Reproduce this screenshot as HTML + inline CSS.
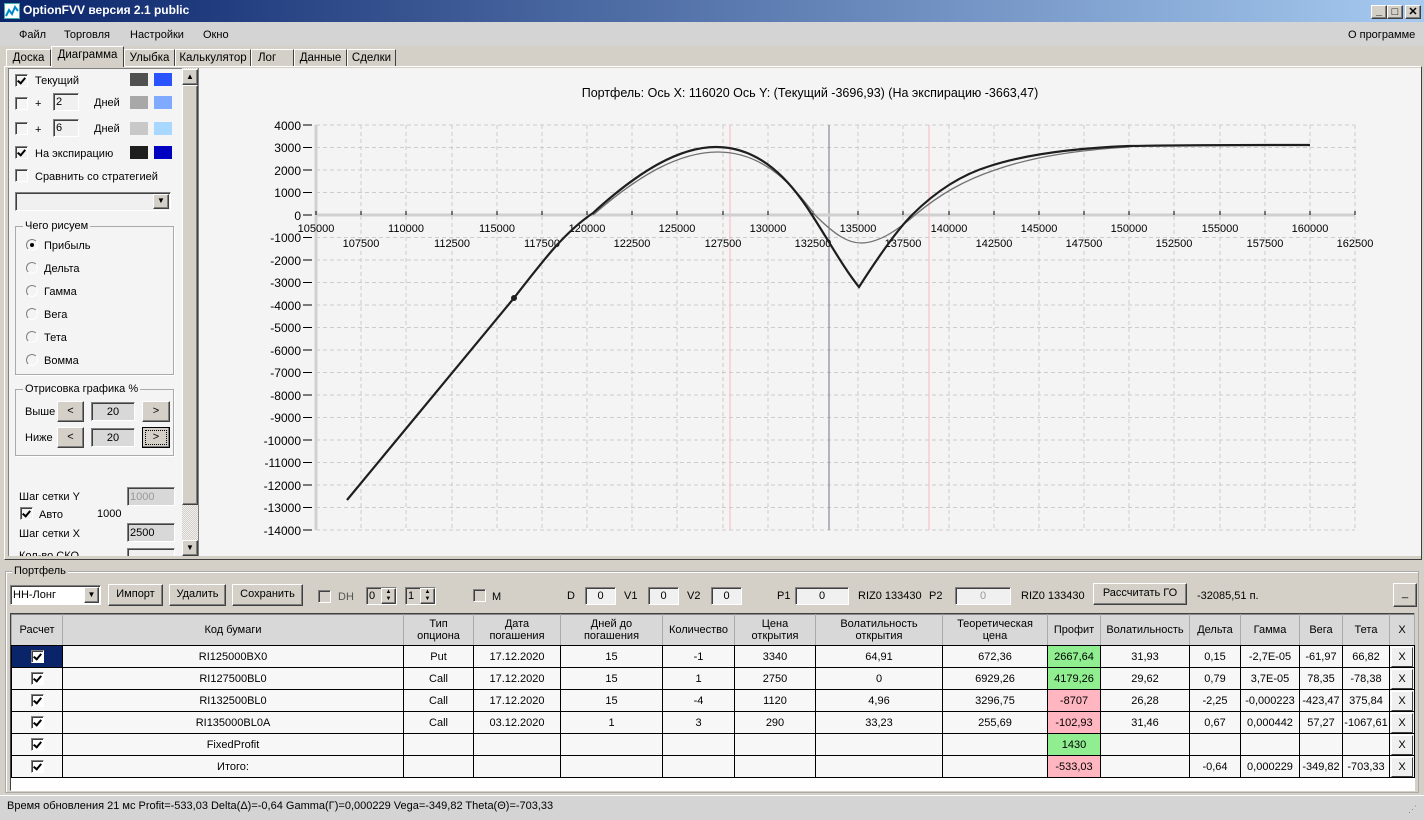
<!DOCTYPE html>
<html><head><meta charset="utf-8"><style>
*{box-sizing:border-box;margin:0;padding:0}
body{width:1424px;height:820px;overflow:hidden;background:#d4d0c8;font-family:"Liberation Sans",sans-serif;font-size:11px;color:#000;position:relative}
.a{position:absolute}
.t{position:absolute;white-space:nowrap;line-height:13px}
.cb{position:absolute;width:13px;height:13px;background:#f4f4f4;border:1px solid;border-color:#808080 #fff #fff #808080;box-shadow:inset 1px 1px 0 #404040}
.cb.k::after{content:"";position:absolute;left:3px;top:1px;width:3px;height:6px;border:solid #000;border-width:0 2px 2px 0;transform:rotate(40deg)}
.sw{position:absolute;width:18px;height:13px}
.inp{position:absolute;background:#f0f0f0;border:1px solid;border-color:#808080 #fff #fff #808080;box-shadow:inset 1px 1px 0 #404040;padding-left:2px;display:flex;align-items:center}
.inp.c{justify-content:center;padding-left:0}
.btn{position:absolute;background:#d4d0c8;border:1px solid;border-color:#fff #404040 #404040 #fff;box-shadow:inset -1px -1px 0 #808080;text-align:center;line-height:18px}
.grp{position:absolute;border:1px solid #aaa;box-shadow:1px 1px 0 #fff}
.grp span{position:absolute;top:-7px;left:7px;background:#f4f4f4;padding:0 2px;line-height:12px}
.rad{position:absolute;width:12px;height:12px;border-radius:50%;background:#f4f4f4;border:1px solid;border-color:#808080 #fff #fff #808080}
.tab{position:absolute;top:49px;height:18px;background:#d4d0c8;border:1px solid;border-color:#fff #404040 transparent #fff;text-align:center;line-height:16px;font-size:11.5px}
table{border-collapse:collapse;position:absolute;left:11px;top:614px;table-layout:fixed;background:#f7f7f7}
td{border:1px solid #000;text-align:center;height:22px;font-size:11px;padding:0;white-space:nowrap;overflow:hidden}
tr.h td{background:#d8d8d8;height:31px;line-height:12px;border-color:#888 #aaa;border-bottom:1px solid #000}
.g{background:#90ee90}.p{background:#ffb6c1}
.xb{display:block;margin:0 auto;width:22px;height:20px;border:1px solid;border-color:#fff #404040 #404040 #fff;background:#efefef;line-height:18px}
.tc{display:inline-block;width:13px;height:13px;border:1px solid;border-color:#808080 #fff #fff #808080;box-shadow:inset 1px 1px 0 #404040;background:#fff;position:relative;vertical-align:middle}
.tc::after{content:"";position:absolute;left:3px;top:1px;width:3px;height:6px;border:solid #000;border-width:0 2px 2px 0;transform:rotate(40deg)}
</style></head><body>
<div class="a" style="left:0;top:0;width:1424px;height:22px;background:linear-gradient(90deg,#0a246a,#a6caf0)"></div>
<div class="a" style="left:4px;top:3px;width:16px;height:16px;background:#fff;border:1px solid #4aa"><svg width="14" height="14"><path d="M1,12 L4,6 L7,10 L10,3 L13,7" stroke="#08c" fill="none" stroke-width="2"/></svg></div>
<div class="t" style="left:23px;top:4px;color:#fff;font-weight:bold;font-size:12px">OptionFVV версия 2.1 public</div>
<div class="btn" style="left:1371px;top:5px;width:16px;height:14px;line-height:10px;font-weight:bold">_</div>
<div class="btn" style="left:1387px;top:5px;width:16px;height:14px;line-height:12px">□</div>
<div class="btn" style="left:1405px;top:5px;width:16px;height:14px;line-height:12px;font-weight:bold">✕</div>
<div class="a" style="left:0;top:22px;width:1424px;height:24px;background:#d4d4d4"></div>
<div class="t" style="left:19px;top:29px">Файл</div><div class="t" style="left:64px;top:29px">Торговля</div><div class="t" style="left:130px;top:29px">Настройки</div><div class="t" style="left:203px;top:29px">Окно</div><div class="t" style="left:1348px;top:29px">О программе</div>
<div class="tab" style="left:6px;width:45px">Доска</div>
<div class="tab" style="left:51px;width:73px;top:46px;height:21px;z-index:2;background:#d4d0c8;border-bottom:none">Диаграмма</div>
<div class="tab" style="left:124px;width:51px">Улыбка</div>
<div class="tab" style="left:175px;width:76px">Калькулятор</div>
<div class="tab" style="left:251px;width:43px;text-align:left;padding-left:6px">Лог</div>
<div class="tab" style="left:294px;width:53px">Данные</div>
<div class="tab" style="left:347px;width:49px">Сделки</div>
<div class="a" style="left:4px;top:66px;width:1418px;height:494px;border:1px solid;border-color:#fff #404040 #404040 #fff"></div>
<div class="a" style="left:8px;top:68px;width:174px;height:488px;background:#f4f4f4;border-left:1px solid #808080;border-top:1px solid #808080"></div>
<div class="cb k" style="left:15px;top:74px"></div><div class="t" style="left:35px;top:75px">Текущий</div>
<div class="sw" style="left:130px;top:73px;background:#505050"></div><div class="sw" style="left:154px;top:73px;background:#2a52fe"></div>
<div class="cb" style="left:15px;top:97px"></div><div class="t" style="left:35px;top:98px">+</div><div class="inp" style="left:53px;top:93px;width:26px;height:18px">2</div><div class="t" style="left:94px;top:97px">Дней</div>
<div class="sw" style="left:130px;top:96px;background:#a8a8a8"></div><div class="sw" style="left:154px;top:96px;background:#7faaff"></div>
<div class="cb" style="left:15px;top:122px"></div><div class="t" style="left:35px;top:124px">+</div><div class="inp" style="left:53px;top:119px;width:26px;height:18px">6</div><div class="t" style="left:94px;top:123px">Дней</div>
<div class="sw" style="left:130px;top:122px;background:#c8c8c8"></div><div class="sw" style="left:154px;top:122px;background:#a8d8ff"></div>
<div class="cb k" style="left:15px;top:146px"></div><div class="t" style="left:35px;top:148px">На экспирацию</div>
<div class="sw" style="left:130px;top:146px;background:#1e1e1e"></div><div class="sw" style="left:154px;top:146px;background:#0000c0"></div>
<div class="cb" style="left:15px;top:169px"></div><div class="t" style="left:35px;top:171px">Сравнить со стратегией</div>
<div class="inp" style="left:15px;top:192px;width:156px;height:19px"></div><div class="btn" style="left:153px;top:194px;width:16px;height:15px;line-height:12px;font-size:8px">▼</div>
<div class="grp" style="left:15px;top:226px;width:159px;height:149px"><span>Чего рисуем</span></div>
<div class="rad" style="left:26px;top:239px"><div class="a" style="left:3px;top:3px;width:4px;height:4px;background:#000;border-radius:50%"></div></div><div class="t" style="left:44px;top:240px">Прибыль</div>
<div class="rad" style="left:26px;top:262px"></div><div class="t" style="left:44px;top:263px">Дельта</div>
<div class="rad" style="left:26px;top:285px"></div><div class="t" style="left:44px;top:286px">Гамма</div>
<div class="rad" style="left:26px;top:308px"></div><div class="t" style="left:44px;top:309px">Вега</div>
<div class="rad" style="left:26px;top:331px"></div><div class="t" style="left:44px;top:332px">Тета</div>
<div class="rad" style="left:26px;top:354px"></div><div class="t" style="left:44px;top:355px">Вомма</div>
<div class="grp" style="left:15px;top:389px;width:159px;height:67px"><span>Отрисовка графика %</span></div>
<div class="t" style="left:25px;top:406px">Выше</div><div class="btn" style="left:57px;top:401px;width:27px;height:21px">&lt;</div><div class="inp c" style="left:91px;top:402px;width:44px;height:19px;background:#d8d8d8">20</div><div class="btn" style="left:142px;top:401px;width:28px;height:21px">&gt;</div>
<div class="t" style="left:25px;top:432px">Ниже</div><div class="btn" style="left:57px;top:427px;width:27px;height:21px">&lt;</div><div class="inp c" style="left:91px;top:428px;width:44px;height:19px;background:#d8d8d8">20</div><div class="btn" style="left:142px;top:427px;width:28px;height:21px;border:1px solid #000;outline:1px dotted #000;outline-offset:-4px">&gt;</div>
<div class="t" style="left:19px;top:491px">Шаг сетки Y</div><div class="inp" style="left:127px;top:487px;width:48px;height:19px;background:#d8d8d8;color:#999">1000</div>
<div class="cb k" style="left:20px;top:507px"></div><div class="t" style="left:39px;top:509px">Авто</div><div class="t" style="left:97px;top:508px">1000</div>
<div class="t" style="left:19px;top:528px">Шаг сетки X</div><div class="inp" style="left:127px;top:523px;width:48px;height:19px;background:#d8d8d8">2500</div>
<div class="t" style="left:19px;top:550px;height:6px;overflow:hidden">Кол-во СКО</div><div class="inp" style="left:127px;top:548px;width:48px;height:8px;border-bottom:none"></div>
<div class="a" style="left:182px;top:68px;width:16px;height:488px;background:repeating-conic-gradient(#d4d0c8 0 25%,#f0f0f0 0 50%) 0 0/2px 2px"></div>
<div class="btn" style="left:182px;top:69px;width:16px;height:16px;font-size:8px;line-height:13px">▲</div>
<div class="btn" style="left:182px;top:85px;width:16px;height:420px"></div>
<div class="btn" style="left:182px;top:540px;width:16px;height:16px;font-size:8px;line-height:13px">▼</div>
<div class="a" style="left:198px;top:68px;width:1223px;height:488px;background:#f4f4f4;border-left:1px solid #808080"></div>
<svg class="a" style="left:0;top:0" width="1424" height="560" font-family="Liberation Sans,sans-serif" font-size="12">
<text x="810" y="97" text-anchor="middle" font-size="12.5">Портфель: Ось X:  116020 Ось Y:  (Текущий -3696,93)  (На экспирацию -3663,47)</text>
<g stroke="#ccc" stroke-dasharray="4,3" stroke-width="1">
<path d="M316,125H1355M316,147.5H1355M316,170H1355M316,192.5H1355M316,237.5H1355M316,260H1355M316,282.5H1355M316,305H1355M316,327.5H1355M316,350H1355M316,372.5H1355M316,395H1355M316,417.5H1355M316,440H1355M316,462.5H1355M316,485H1355M316,507.5H1355M316,530H1355"/>
<path d="M361,125V530M406,125V530M452,125V530M497,125V530M542,125V530M587,125V530M632,125V530M677,125V530M723,125V530M768,125V530M813,125V530M858,125V530M903,125V530M949,125V530M994,125V530M1039,125V530M1084,125V530M1129,125V530M1174,125V530M1220,125V530M1265,125V530M1310,125V530M1355,125V530"/>
</g>
<line x1="730" y1="125" x2="730" y2="530" stroke="#f8b8c0"/>
<line x1="929" y1="125" x2="929" y2="530" stroke="#f8b8c0"/>
<line x1="829" y1="125" x2="829" y2="530" stroke="#707880"/>
<line x1="316" y1="125" x2="316" y2="530" stroke="#d0d0d0" stroke-width="3"/>
<line x1="316" y1="215" x2="1355" y2="215" stroke="#d0d0d0" stroke-width="3"/>
<g stroke="#000"><path d="M303,125h9M303,147.5h9M303,170h9M303,192.5h9M303,215h9M303,237.5h9M303,260h9M303,282.5h9M303,305h9M303,327.5h9M303,350h9M303,372.5h9M303,395h9M303,417.5h9M303,440h9M303,462.5h9M303,485h9M303,507.5h9M303,530h9"/>
<path d="M316,211v4M361,211v4M406,211v4M452,211v4M497,211v4M542,211v4M587,211v4M632,211v4M677,211v4M723,211v4M768,211v4M813,211v4M858,211v4M903,211v4M949,211v4M994,211v4M1039,211v4M1084,211v4M1129,211v4M1174,211v4M1220,211v4M1265,211v4M1310,211v4M1355,211v4"/></g>
<g text-anchor="end"><text x="301" y="130">4000</text><text x="301" y="152">3000</text><text x="301" y="175">2000</text><text x="301" y="197">1000</text><text x="301" y="220">0</text><text x="301" y="242">-1000</text><text x="301" y="265">-2000</text><text x="301" y="287">-3000</text><text x="301" y="310">-4000</text><text x="301" y="332">-5000</text><text x="301" y="355">-6000</text><text x="301" y="377">-7000</text><text x="301" y="400">-8000</text><text x="301" y="422">-9000</text><text x="301" y="445">-10000</text><text x="301" y="467">-11000</text><text x="301" y="490">-12000</text><text x="301" y="512">-13000</text><text x="301" y="535">-14000</text></g>
<g text-anchor="middle" font-size="11"><text x="316" y="232">105000</text><text x="406" y="232">110000</text><text x="497" y="232">115000</text><text x="587" y="232">120000</text><text x="677" y="232">125000</text><text x="768" y="232">130000</text><text x="858" y="232">135000</text><text x="949" y="232">140000</text><text x="1039" y="232">145000</text><text x="1129" y="232">150000</text><text x="1220" y="232">155000</text><text x="1310" y="232">160000</text>
<text x="361" y="247">107500</text><text x="452" y="247">112500</text><text x="542" y="247">117500</text><text x="632" y="247">122500</text><text x="723" y="247">127500</text><text x="813" y="247">132500</text><text x="903" y="247">137500</text><text x="994" y="247">142500</text><text x="1084" y="247">147500</text><text x="1174" y="247">152500</text><text x="1265" y="247">157500</text><text x="1355" y="247">162500</text></g>
<path d="M593,215 C640,174 680,152 718,152 C765,152 795,188 815,215 C835,235 848,243 861,243 C880,243 900,228 915,215 C940,194 965,180 995,170 C1035,156 1080,150 1129,147" stroke="#707070" stroke-width="1.3" fill="none"/>
<path d="M347,500 L514,298 C545,258 565,232 593,213 C640,170 680,147 716,147 C760,147 790,180 812,215 C830,243 845,270 859,287 C875,262 895,232 912,215 C935,192 960,175 990,166 C1030,153 1080,148 1129,146 C1200,145 1260,145 1310,145" stroke="#1e1e1e" stroke-width="2.2" fill="none"/>
<circle cx="514" cy="298" r="3" fill="#1e1e1e"/>
</svg>
<div class="a" style="left:5px;top:571px;width:1414px;height:222px;border:1px solid #aaa;box-shadow:inset 1px 1px 0 #fff"></div>
<div class="t" style="left:12px;top:565px;background:#d4d0c8;padding:0 2px">Портфель</div>
<div class="inp" style="left:10px;top:585px;width:91px;height:20px;background:#fff">НН-Лонг</div><div class="btn" style="left:84px;top:587px;width:15px;height:16px;font-size:8px;line-height:13px">▼</div>
<div class="btn" style="left:108px;top:584px;width:55px;height:22px">Импорт</div>
<div class="btn" style="left:169px;top:584px;width:57px;height:22px">Удалить</div>
<div class="btn" style="left:232px;top:584px;width:71px;height:22px">Сохранить</div>
<div class="cb" style="left:318px;top:590px;background:#d4d0c8"></div><div class="t" style="left:338px;top:591px;color:#555">DH</div>
<div class="inp" style="left:366px;top:587px;width:31px;height:18px;background:#d4d0c8">0</div><div class="btn" style="left:381px;top:588px;width:15px;height:16px;font-size:6px;line-height:7px">▲<br>▼</div>
<div class="inp" style="left:405px;top:587px;width:31px;height:18px;background:#d4d0c8">1</div><div class="btn" style="left:420px;top:588px;width:15px;height:16px;font-size:6px;line-height:7px">▲<br>▼</div>
<div class="cb" style="left:473px;top:589px;background:#d4d0c8"></div><div class="t" style="left:492px;top:591px">M</div>
<div class="t" style="left:567px;top:590px">D</div><div class="inp c" style="left:585px;top:587px;width:31px;height:18px">0</div>
<div class="t" style="left:624px;top:590px">V1</div><div class="inp c" style="left:648px;top:587px;width:31px;height:18px">0</div>
<div class="t" style="left:687px;top:590px">V2</div><div class="inp c" style="left:711px;top:587px;width:31px;height:18px">0</div>
<div class="t" style="left:777px;top:590px">P1</div><div class="inp c" style="left:795px;top:587px;width:54px;height:18px">0</div>
<div class="t" style="left:858px;top:590px">RIZ0 133430</div><div class="t" style="left:929px;top:590px">P2</div>
<div class="inp c" style="left:955px;top:587px;width:56px;height:18px;color:#999">0</div>
<div class="t" style="left:1021px;top:590px">RIZ0 133430</div>
<div class="btn" style="left:1093px;top:583px;width:94px;height:22px">Рассчитать ГО</div>
<div class="t" style="left:1197px;top:590px">-32085,51 п.</div>
<div class="btn" style="left:1393px;top:583px;width:24px;height:24px">_</div>
<div class="a" style="left:10px;top:613px;width:1405px;height:178px;background:#fff;border:1px solid;border-color:#404040 #fff #fff #404040"></div>
<table>
<colgroup><col style="width:51px"><col style="width:341px"><col style="width:70px"><col style="width:87px"><col style="width:102px"><col style="width:72px"><col style="width:81px"><col style="width:127px"><col style="width:105px"><col style="width:53px"><col style="width:89px"><col style="width:51px"><col style="width:59px"><col style="width:43px"><col style="width:47px"><col style="width:25px"></colgroup>
<tr class="h"><td>Расчет</td><td>Код бумаги</td><td>Тип<br>опциона</td><td>Дата<br>погашения</td><td>Дней до<br>погашения</td><td>Количество</td><td>Цена<br>открытия</td><td>Волатильность<br>открытия</td><td>Теоретическая<br>цена</td><td>Профит</td><td>Волатильность</td><td>Дельта</td><td>Гамма</td><td>Вега</td><td>Тета</td><td>X</td></tr>
<tr><td style="background:#0a246a"><span class="tc"></span></td><td>RI125000BX0</td><td>Put</td><td>17.12.2020</td><td>15</td><td>-1</td><td>3340</td><td>64,91</td><td>672,36</td><td class="g">2667,64</td><td>31,93</td><td>0,15</td><td>-2,7E-05</td><td>-61,97</td><td>66,82</td><td><span class="xb">X</span></td></tr>
<tr><td><span class="tc"></span></td><td>RI127500BL0</td><td>Call</td><td>17.12.2020</td><td>15</td><td>1</td><td>2750</td><td>0</td><td>6929,26</td><td class="g">4179,26</td><td>29,62</td><td>0,79</td><td>3,7E-05</td><td>78,35</td><td>-78,38</td><td><span class="xb">X</span></td></tr>
<tr><td><span class="tc"></span></td><td>RI132500BL0</td><td>Call</td><td>17.12.2020</td><td>15</td><td>-4</td><td>1120</td><td>4,96</td><td>3296,75</td><td class="p">-8707</td><td>26,28</td><td>-2,25</td><td>-0,000223</td><td>-423,47</td><td>375,84</td><td><span class="xb">X</span></td></tr>
<tr><td><span class="tc"></span></td><td>RI135000BL0A</td><td>Call</td><td>03.12.2020</td><td>1</td><td>3</td><td>290</td><td>33,23</td><td>255,69</td><td class="p">-102,93</td><td>31,46</td><td>0,67</td><td>0,000442</td><td>57,27</td><td>-1067,61</td><td><span class="xb">X</span></td></tr>
<tr><td><span class="tc"></span></td><td>FixedProfit</td><td></td><td></td><td></td><td></td><td></td><td></td><td></td><td class="g">1430</td><td></td><td></td><td></td><td></td><td></td><td><span class="xb">X</span></td></tr>
<tr><td><span class="tc"></span></td><td>Итого:</td><td></td><td></td><td></td><td></td><td></td><td></td><td></td><td class="p">-533,03</td><td></td><td>-0,64</td><td>0,000229</td><td>-349,82</td><td>-703,33</td><td><span class="xb">X</span></td></tr>
</table>
<div class="a" style="left:0;top:795px;width:1424px;height:25px;background:#d4d4d4;border-top:1px solid #fff"></div>
<div class="t" style="left:7px;top:800px">Время обновления 21 мс  Profit=-533,03 Delta(Δ)=-0,64 Gamma(Γ)=0,000229 Vega=-349,82 Theta(Θ)=-703,33</div>
<div class="t" style="left:1408px;top:803px;color:#888;font-size:9px">⋰</div>
</body></html>
